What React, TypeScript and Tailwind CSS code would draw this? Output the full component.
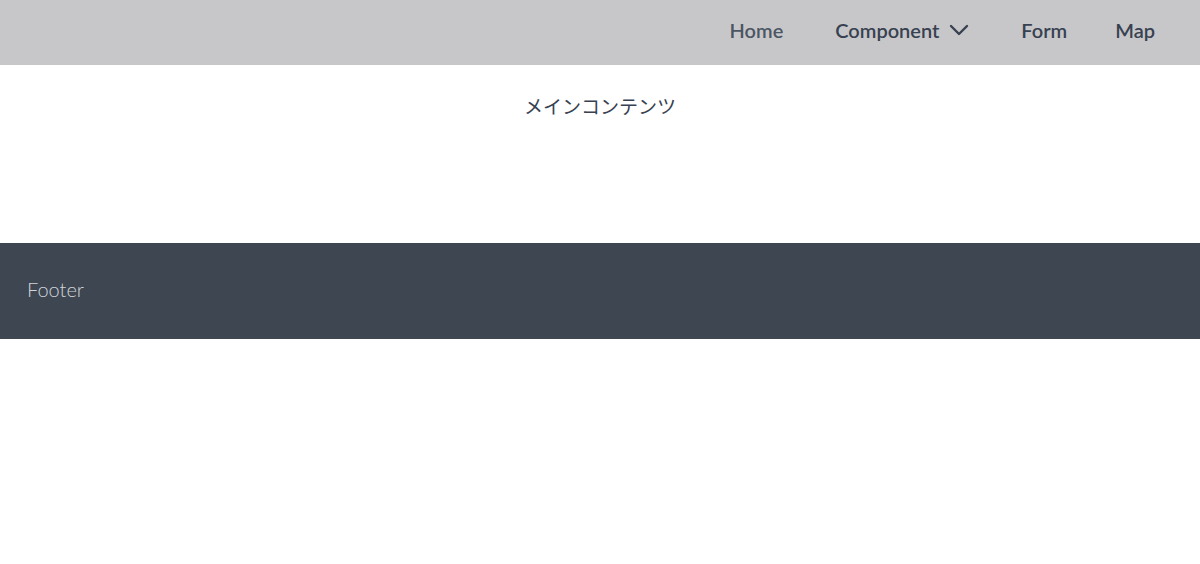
const navItems = ["Component", "Form", "Map"];

const Chevron = () => (
  <svg width="20" height="12" viewBox="0 0 20 12" fill="none" className="mr-1">
    <path d="M2 2L10 10L18 2" stroke="currentColor" strokeWidth="2.4" strokeLinecap="round" strokeLinejoin="round" />
  </svg>
);

const App = () => {
  return (
    <div className="min-h-screen bg-white font-['Lato','Noto_Sans_CJK_JP',sans-serif]">
      <header className="flex h-[65px] items-center justify-end bg-[#c7c7c9] pb-[6px] pr-[45px]">
        <nav className="flex items-center gap-12 text-[20px] font-semibold">
          <a className="mr-1 text-[#4b5563]">Home</a>
          {navItems.map((item) =>
            item === "Component" ? (
              <button key={item} className="flex items-center gap-[10px] font-semibold text-[#374151]">
                {item}
                <Chevron />
              </button>
            ) : (
              <a key={item} className="text-[#374151]">
                {item}
              </a>
            )
          )}
        </nav>
      </header>

      <main className="flex h-[178px] justify-center pt-[28px]">
        <p className="text-[19px] text-[#374151]">メインコンテンツ</p>
      </main>

      <footer className="flex h-[96px] items-center bg-[#3d4651] px-[27px] pb-1">
        <p className="text-[20px] font-light text-[#d1d5db]">Footer</p>
      </footer>
    </div>
  );
};

export default App;
